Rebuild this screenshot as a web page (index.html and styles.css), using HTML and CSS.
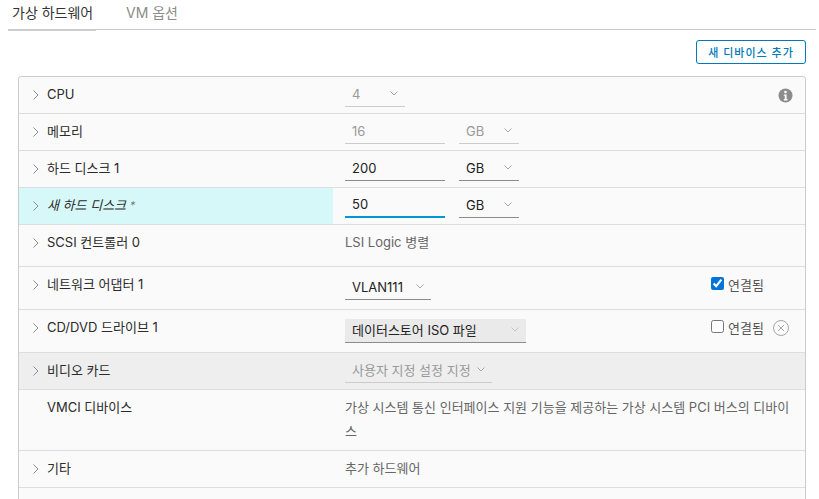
FILE: index.html
```html
<!DOCTYPE html>
<html lang="ko">
<head>
    <meta charset="UTF-8">
    <title>설정 편집</title>
    <link rel="stylesheet" href="styles.css">
</head>
<body>
    <div class="tabs">
        <div class="tab active">가상 하드웨어</div>
        <div class="tab">VM 옵션</div>
    </div>

    <div class="toolbar">
        <button class="add-btn">새 디바이스 추가</button>
    </div>

    <div class="panel">
        <div class="row h37">
            <div class="label"><svg class="caret" viewBox="0 0 6 10"><path d="M.5.5 5 5 .5 9.500"/></svg>CPU</div>
            <div class="value">
                <div class="field dim w60"><span>4</span><svg class="chev" viewBox="0 0 8 5"><path d="M.5.500 4 4 7.500.5"/></svg></div>
            </div>
            <div class="side end">
                <svg class="info" viewBox="0 0 16 16"><circle cx="8" cy="8" r="7.500"/><circle class="mark" cx="8" cy="4.300" r="1.500"/><path class="mark" d="M6.200 6.800h3v5h1v1.500h-4v-1.500h1v-3.500h-1z"/></svg>
            </div>
        </div>
        <div class="row h37">
            <div class="label"><svg class="caret" viewBox="0 0 6 10"><path d="M.5.5 5 5 .5 9.500"/></svg>메모리</div>
            <div class="value">
                <div class="field dim w100"><span>16</span></div>
                <div class="field dim w60"><span>GB</span><svg class="chev" viewBox="0 0 8 5"><path d="M.5.500 4 4 7.500.5"/></svg></div>
            </div>
        </div>
        <div class="row h37">
            <div class="label"><svg class="caret" viewBox="0 0 6 10"><path d="M.5.5 5 5 .5 9.500"/></svg>하드 디스크 1</div>
            <div class="value">
                <div class="field w100"><span>200</span></div>
                <div class="field w60"><span>GB</span><svg class="chev" viewBox="0 0 8 5"><path d="M.5.500 4 4 7.500.5"/></svg></div>
            </div>
        </div>
        <div class="row h37">
            <div class="label new"><svg class="caret" viewBox="0 0 6 10"><path d="M.5.5 5 5 .5 9.500"/></svg><em>새 하드 디스크 <span class="star">*</span></em></div>
            <div class="value">
                <div class="field focus w100"><span>50</span></div>
                <div class="field w60"><span>GB</span><svg class="chev" viewBox="0 0 8 5"><path d="M.5.500 4 4 7.500.5"/></svg></div>
            </div>
        </div>
        <div class="row h42">
            <div class="label"><svg class="caret" viewBox="0 0 6 10"><path d="M.5.5 5 5 .5 9.500"/></svg>SCSI 컨트롤러 0</div>
            <div class="value text">LSI Logic 병렬</div>
        </div>
        <div class="row h43">
            <div class="label"><svg class="caret" viewBox="0 0 6 10"><path d="M.5.5 5 5 .5 9.500"/></svg>네트워크 어댑터 1</div>
            <div class="value low">
                <div class="field w86"><span>VLAN111</span><svg class="chev" viewBox="0 0 8 5"><path d="M.5.500 4 4 7.500.5"/></svg></div>
            </div>
            <div class="side">
                <label class="check"><input type="checkbox" checked>연결됨</label>
            </div>
        </div>
        <div class="row h43">
            <div class="label"><svg class="caret" viewBox="0 0 6 10"><path d="M.5.5 5 5 .5 9.500"/></svg>CD/DVD 드라이브 1</div>
            <div class="value low">
                <div class="field shaded w181"><span>데이터스토어 ISO 파일</span><svg class="chev" viewBox="0 0 8 5"><path d="M.5.500 4 4 7.500.5"/></svg></div>
            </div>
            <div class="side">
                <label class="check"><input type="checkbox">연결됨</label>
                <svg class="remove" viewBox="0 0 16 16"><circle cx="8" cy="8" r="7.500"/><path d="M5 5l6 6M11 5l-6 6"/></svg>
            </div>
        </div>
        <div class="row h37 grey">
            <div class="label"><svg class="caret" viewBox="0 0 6 10"><path d="M.5.5 5 5 .5 9.500"/></svg>비디오 카드</div>
            <div class="value">
                <div class="field dim w147"><span>사용자 지정 설정 지정</span><svg class="chev" viewBox="0 0 8 5"><path d="M.5.500 4 4 7.500.5"/></svg></div>
            </div>
        </div>
        <div class="row h61">
            <div class="label"><span class="nocaret"></span>VMCI 디바이스</div>
            <div class="value text wrap">가상 시스템 통신 인터페이스 지원 기능을 제공하는 가상 시스템 PCI 버스의 디바이스</div>
        </div>
        <div class="row h37">
            <div class="label"><svg class="caret" viewBox="0 0 6 10"><path d="M.5.5 5 5 .5 9.500"/></svg>기타</div>
            <div class="value text">추가 하드웨어</div>
        </div>
        <div class="row h37"></div>
    </div>
</body>
</html>
```

FILE: styles.css
```css
html {
    overflow: hidden;
}

body {
    margin: 0;
    background: #fff;
    font-family: "Inter", "Noto Sans CJK KR", sans-serif;
    font-size: 13px;
    color: #333;
}

.tabs {
    display: flex;
    height: 29px;
    margin-left: 8px;
    margin-right: 3px;
    border-bottom: 1px solid #ccc;
}
.tab {
    padding: 3px 4px 0 4px;
    margin-right: 26px;
    font-size: 14px;
    line-height: 20px;
    color: #8c8c8c;
}
.tab.active {
    width: 80px;
    height: 26px;
    margin-right: 26px;
    color: #333;
    border-bottom: 2px solid #ccc;
    white-space: nowrap;
}

.toolbar {
    display: flex;
    justify-content: flex-end;
    padding: 10px 13px 12px 0;
}
.add-btn {
    width: 110px;
    height: 24px;
    padding: 0;
    background: #fff;
    border: 1px solid #0079b8;
    border-radius: 3px;
    color: #0079b8;
    font-family: inherit;
    font-size: 11px;
    font-weight: 500;
    letter-spacing: 1px;
}

.panel {
    width: 786px;
    margin-left: 18px;
    background: #fafafa;
    border: 1px solid #ccc;
    border-radius: 3px 3px 0 0;
}

.row {
    display: flex;
    box-sizing: border-box;
    border-bottom: 1px solid #ddd;
}
.h37 { height: 37px; }
.h42 { height: 42px; }
.h43 { height: 43px; }
.h61 { height: 61px; }
.grey { background: #eee; }

.label {
    display: flex;
    align-items: flex-start;
    box-sizing: border-box;
    width: 314px;
    flex: none;
    padding: 8px 0 0 14px;
    font-size: 13px;
    line-height: 18px;
    color: #2b2b2b;
}
.label.new { background: #d7f8f8; }
.star {
    font-size: 11px;
    font-weight: 300;
    color: #666;
}

.caret {
    width: 6px;
    height: 10px;
    margin: 5px 8px 0 0;
    fill: none;
    stroke: #8c8c8c;
    stroke-width: 1;
}
.nocaret {
    width: 14px;
    flex: none;
}

.value {
    display: flex;
    align-items: flex-start;
    box-sizing: border-box;
    width: 378px;
    flex: none;
    gap: 14px;
    padding: 6px 0 0 12px;
}
.value.low { padding-top: 9px; }
.value.text {
    display: block;
    padding-top: 5px;
    padding-right: 10px;
    line-height: 24px;
    color: #666;
    font-size: 13px;
}
.value.wrap {
    flex: 1;
    word-break: break-all;
}

.field {
    display: flex;
    align-items: center;
    justify-content: space-between;
    box-sizing: border-box;
    height: 24px;
    padding: 0 7px 2px 7px;
    border-bottom: 1px solid #8c8c8c;
    color: #222;
    font-size: 13px;
    white-space: nowrap;
}
.field.dim {
    color: #999;
    border-bottom-color: #ccc;
}
.field.focus { border-bottom: 2px solid #0095d3; }
.field.shaded { background: #eaeaea; }
.field.shaded .chev { stroke: #c4c4c4; }
.w60 { width: 60px; }
.w86 { width: 86px; }
.w100 { width: 100px; }
.w147 { width: 147px; }
.w181 { width: 181px; }

.chev {
    width: 8px;
    height: 5px;
    fill: none;
    stroke: #a6a6a6;
    stroke-width: 1;
}

.side {
    display: flex;
    align-items: flex-start;
    flex: 1;
    padding: 9px 0 0 0;
    gap: 9px;
}
.side.end {
    justify-content: flex-end;
    padding-right: 12px;
}

.info {
    width: 15px;
    height: 15px;
    margin-top: 2px;
    fill: #8c8c8c;
}
.info .mark { fill: #fafafa; }

.check {
    display: flex;
    align-items: flex-start;
    gap: 4px;
    line-height: 18px;
    color: #555;
}
.check input {
    width: 13px;
    height: 13px;
    margin: 1px 0 0 0;
    accent-color: #0075d9;
}

.remove {
    width: 16px;
    height: 16px;
    margin-top: 1px;
    fill: none;
    stroke: #a6a6a6;
    stroke-width: 1;
}
```
